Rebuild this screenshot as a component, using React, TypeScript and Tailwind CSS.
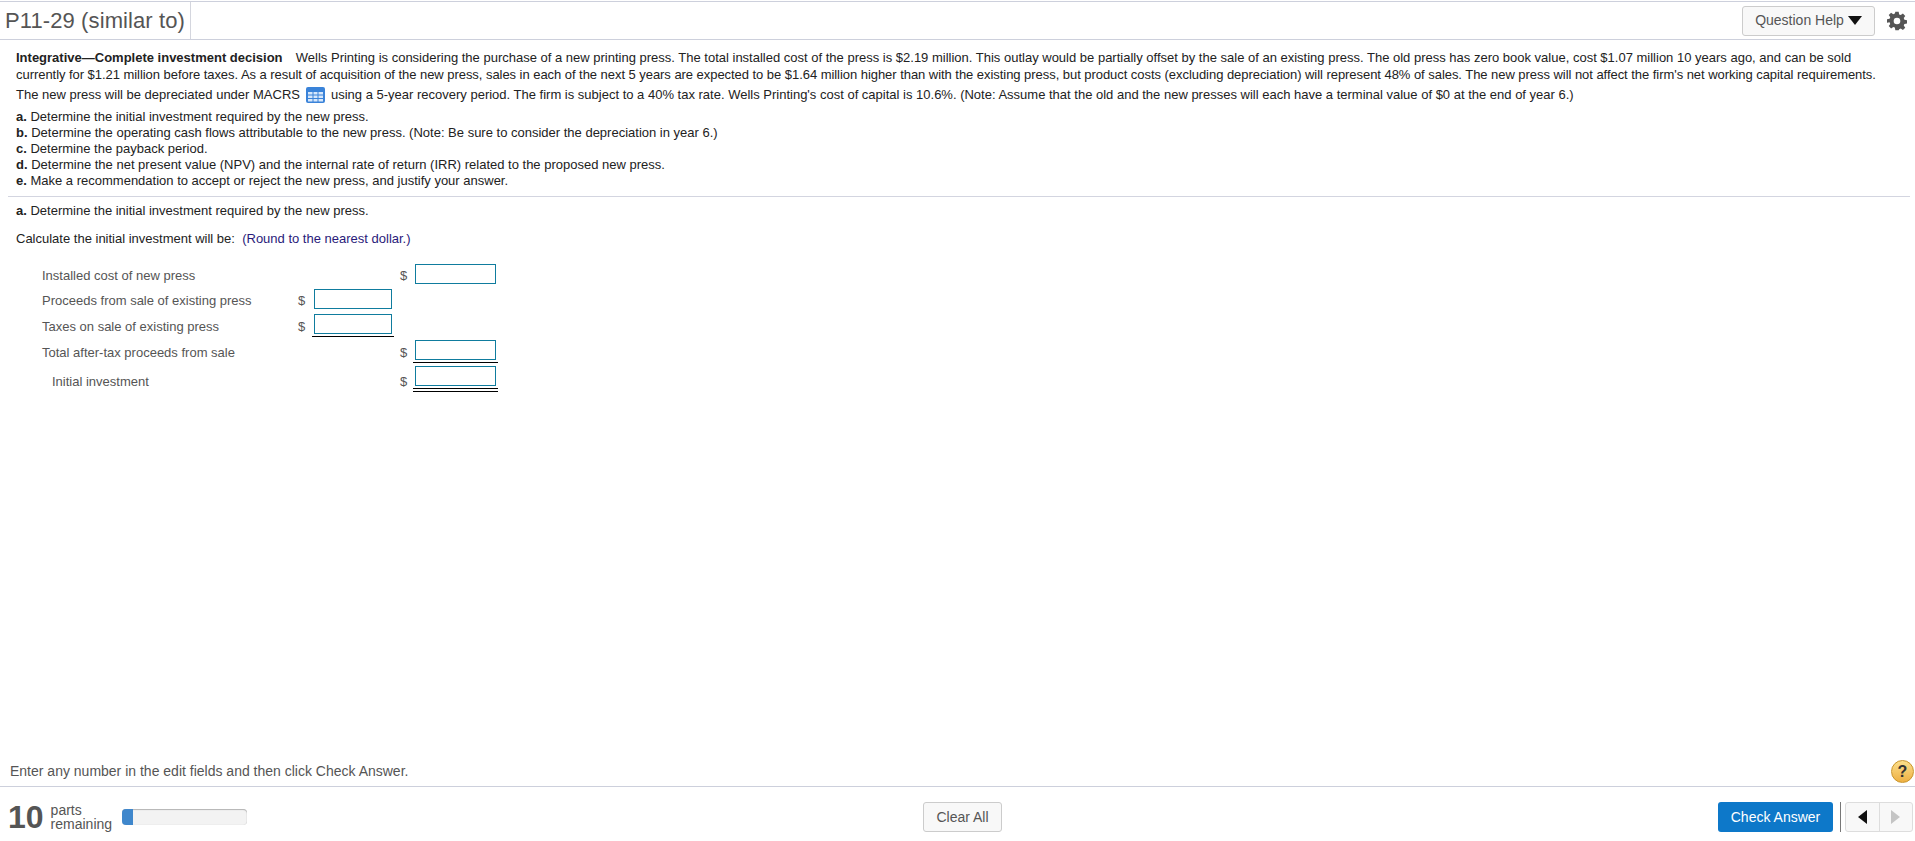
import React from "react";

const F = "font-['Liberation_Sans',Arial,sans-serif]";

function Box({ w, under }: { w: string; under?: "single" | "double" }) {
  return (
    <div className={`flex flex-col items-center ${w}`}>
      <div className="h-[20px] w-full shrink-0 border border-[#0f7c9e] bg-white" />
      {under === "single" && <div className="mt-[2px] h-px w-[calc(100%+4px)] shrink-0 bg-black" />}
      {under === "double" && (
        <div className="mt-[2px] h-[4px] w-[calc(100%+4px)] shrink-0 border-y border-black" />
      )}
    </div>
  );
}

function Row({ label, left, right, under, indent, top, text }: { label: string; left?: boolean; right?: boolean; under?: "single" | "double"; indent?: boolean; top: string; text: string }) {
  return (
    <div className={`flex h-[20px] items-center text-[13px] text-[#555] ${top}`}>
      <div className={`w-[298px] shrink-0 ${text} ${indent ? "pl-[52px]" : "pl-[42px]"}`}>{label}</div>
      <div className={`w-[16px] shrink-0 ${text}`}>{left ? "$" : ""}</div>
      <div className="h-[20px] w-[78px] shrink-0">{left && <Box w="w-[78px]" under={under} />}</div>
      <div className={`w-[23px] shrink-0 pl-[8px] ${text}`}>{right ? "$" : ""}</div>
      <div className="h-[20px] w-[81px] shrink-0">{right && <Box w="w-[81px]" under={under} />}</div>
    </div>
  );
}

export default function App() {
  return (
    <div className={`${F} flex h-[841px] w-full flex-col overflow-hidden bg-white text-[#333]`}>
      <header className="mt-px flex h-[39px] shrink-0 items-center border-y border-[#cdd0dc] pr-[8px]">
        <div className="flex h-full w-[191px] items-center border-r border-[#d4d6de] pl-[5px] text-[22px] tracking-[0.1px] text-[#555]">P11-29 (similar to)</div>
        <div className="ml-auto flex items-center gap-[12px]">
          <button className="flex h-[30px] w-[133px] items-center justify-center gap-[4px] rounded-[3px] border border-[#ccc] bg-[#f8f8f8] text-[14px] text-[#555]">
            Question Help
            <svg width="14" height="9" viewBox="0 0 14 9"><path d="M0 0h14L7 9z" fill="#111" /></svg>
          </button>
          <svg width="20" height="20" viewBox="0 0 24 24" fill="#555">
            <path fillRule="evenodd" d="M10 1h4l.6 3.1 1.9.8 2.6-1.8 2.8 2.8-1.8 2.6.8 1.9 3.1.6v4l-3.1.6-.8 1.9 1.8 2.6-2.8 2.8-2.6-1.8-1.9.8L14 23h-4l-.6-3.1-1.9-.8-2.6 1.8-2.8-2.8 1.8-2.6-.8-1.9L0 14v-4l3.1-.6.8-1.9L2.100 4.900l2.800-2.800 2.600 1.800 1.900-.8zM12 8a4 4 0 1 0 0 8 4 4 0 0 0 0-8z" />
          </svg>
        </div>
      </header>

      <main className="min-h-0 flex-1 pt-[10px] text-[13px] leading-[16px] text-[#222]">
        <div className="px-[16px]">
          <p className="whitespace-nowrap"><b>Integrative—Complete investment decision</b>&nbsp;&nbsp;<span className="ml-[6px]">Wells Printing is considering the purchase of a new printing press. The total installed cost of the press is $2.19 million. This outlay would be partially offset by the sale of an existing press. The old press has zero book value, cost $1.07 million 10 years ago, and can be sold</span></p>
          <p className="mt-px whitespace-nowrap tracking-[-0.047px]">currently for $1.21 million before taxes. As a result of acquisition of the new press, sales in each of the next 5 years are expected to be $1.64 million higher than with the existing press, but product costs (excluding depreciation) will represent 48% of sales. The new press will not affect the firm's net working capital requirements.</p>
          <p className="mt-[4px] flex items-center whitespace-pre">
            The new press will be depreciated under MACRS
            <svg className="mx-[6px]" width="19" height="16" viewBox="0 0 19 16">
              <rect width="19" height="16" rx="2" fill="#3a83d9" />
              <path d="M2 5h4.500v2.500H2zM7.500 5h4v2.500h-4zM12.500 5H17v2.500h-4.500zM2 8.500h4.500V11H2zM7.500 8.500h4V11h-4zM12.500 8.500H17V11h-4.500zM2 12h4.500v2.500H2zM7.500 12h4v2.500h-4zM12.500 12H17v2.500h-4.500z" fill="#d6e7fb" />
            </svg>
            using a 5-year recovery period. The firm is subject to a 40% tax rate. Wells Printing's cost of capital is 10.6%. (Note: Assume that the old and the new presses will each have a terminal value of $0 at the end of year 6.)
          </p>
          <div className="mt-[6px]">
            <p><b>a.</b> Determine the initial investment required by the new press.</p>
            <p><b>b.</b> Determine the operating cash flows attributable to the new press. (Note: Be sure to consider the depreciation in year 6.)</p>
            <p><b>c.</b> Determine the payback period.</p>
            <p><b>d.</b> Determine the net present value (NPV) and the internal rate of return (IRR) related to the proposed new press.</p>
            <p><b>e.</b> Make a recommendation to accept or reject the new press, and justify your answer.</p>
          </div>
        </div>
        <hr className="ml-[8px] mr-[5px] mt-[7px] border-[#d3d5e0]" />
        <div className="px-[16px]">
          <p className="mt-[6px]"><b>a.</b> Determine the initial investment required by the new press.</p>
          <p className="mt-[12px]">Calculate the initial investment will be:&nbsp; <span className="text-[#2a1a7a]">(Round to the nearest dollar.)</span></p>
        </div>
        <div className="mt-[17px]">
          <Row top="" text="pt-[4px]" label="Installed cost of new press" right />
          <Row top="mt-[5px]" text="pt-[3px]" label="Proceeds from sale of existing press" left />
          <Row top="mt-[5px]" text="pt-[5px]" label="Taxes on sale of existing press" left under="single" />
          <Row top="mt-[6px]" text="pt-[5px]" label="Total after-tax proceeds from sale" right under="single" />
          <Row top="mt-[6px]" text="pt-[11px]" label="Initial investment" right under="double" indent />
        </div>
      </main>

      <div className="flex h-[33px] shrink-0 items-center justify-between border-b border-[#cdd0dc] pl-[10px] pr-px pt-[3px] text-[14px] text-[#555]">
        <span>Enter any number in the edit fields and then click Check Answer.</span>
        <span className="flex h-[23px] w-[23px] items-center justify-center rounded-full border border-[#c9952c] bg-gradient-to-b from-[#fbdf8a] to-[#eeb041] text-[16px] font-bold leading-none text-[#333]">?</span>
      </div>
      <footer className="relative flex h-[54px] shrink-0 items-center pl-[8px] pr-[2px] pt-[6px] text-[#555]">
        <span className="text-[32px] font-bold leading-none">10</span>
        <span className="ml-[7px] text-[14px] leading-[14px]">parts<br />remaining</span>
        <div className="relative ml-[10px] h-[16px] w-[125px] overflow-hidden rounded-[4px] bg-[#f3f3f3] shadow-[inset_0_1px_1px_rgba(0,0,0,0.25),inset_0_0_1px_rgba(0,0,0,0.2)]">
          <div className="h-full w-[11px] bg-[#3f87cc]" />
        </div>
        <button className="absolute left-[923px] top-[15px] h-[30px] w-[79px] rounded-[3px] border border-[#ccc] bg-[#f8f8f8] text-[14px] text-[#555]">Clear All</button>
        <div className="ml-auto flex items-center">
          <button className="h-[30px] w-[115px] rounded-[3px] bg-[#0d78c9] text-[14px] text-white">Check Answer</button>
          <div className="ml-[7px] h-[30px] w-px bg-[#777]" />
          <div className="ml-[4px] flex h-[30px] w-[68px] rounded-[3px] border border-[#ddd] bg-[#f8f8f8]">
            <div className="flex flex-1 items-center justify-center border-r border-[#ddd]">
              <svg width="9" height="14" viewBox="0 0 9 14"><path d="M9 0v14L0 7z" fill="#111" /></svg>
            </div>
            <div className="flex flex-1 items-center justify-center">
              <svg width="9" height="14" viewBox="0 0 9 14"><path d="M0 0v14l9-7z" fill="#c4c4c4" /></svg>
            </div>
          </div>
        </div>
      </footer>
    </div>
  );
}
